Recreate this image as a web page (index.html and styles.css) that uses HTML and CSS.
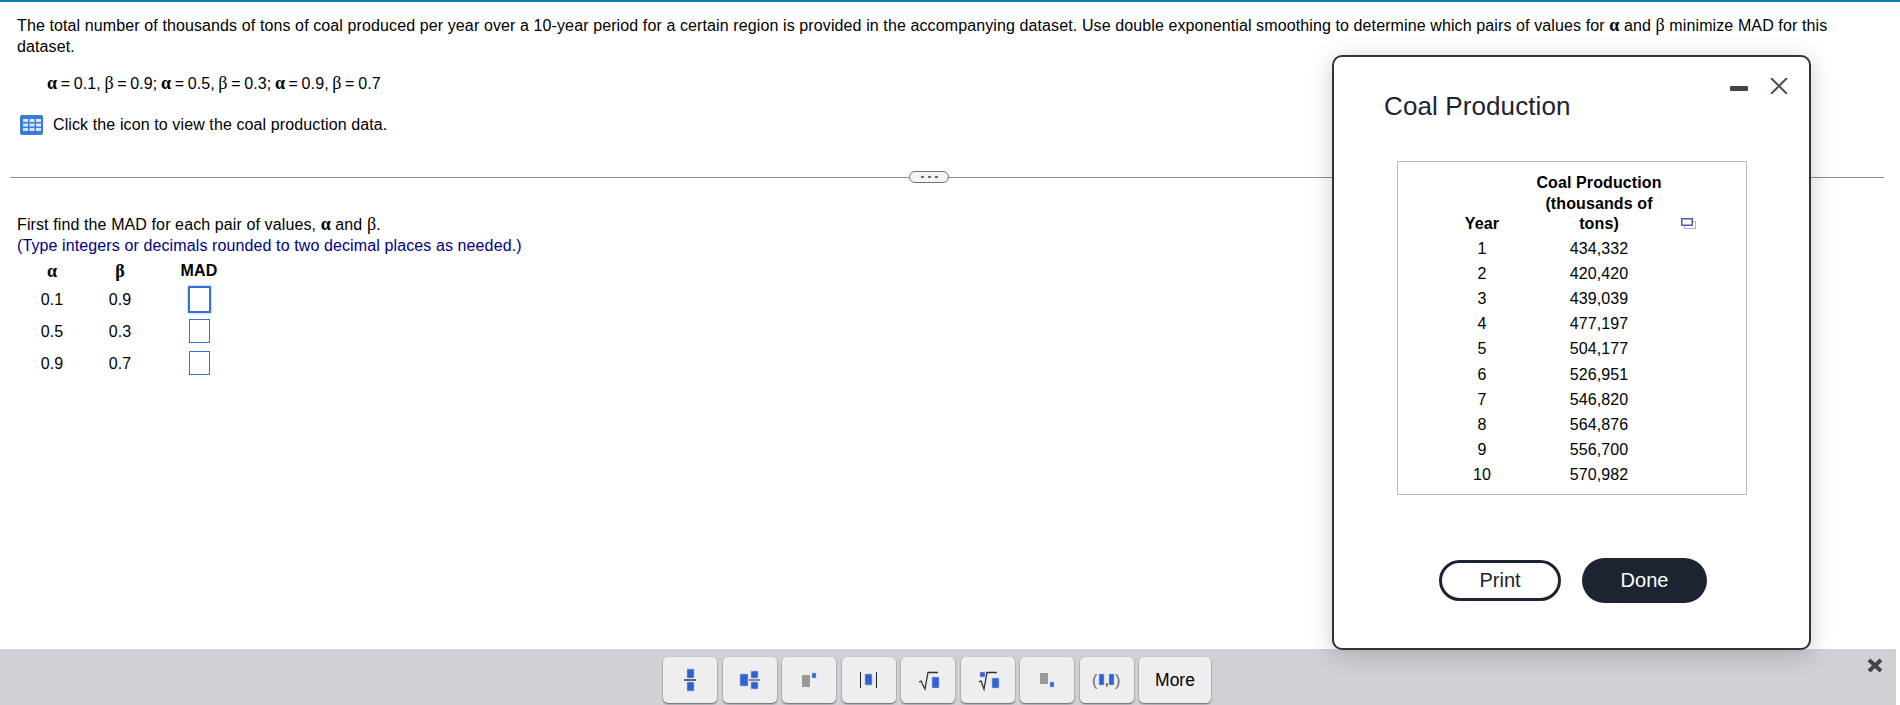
FILE: index.html
```html
<!DOCTYPE html>
<html lang="en">
<head>
  <meta charset="UTF-8">
  <meta name="viewport" content="width=device-width, initial-scale=1.0">
  <title>Coal Production</title>
  <link rel="stylesheet" href="styles.css">
</head>
<body>

  <main class="question">
    <p class="intro">The total number of thousands of tons of coal produced per year over a 10-year period for a certain region is provided in the accompanying dataset. Use double exponential smoothing to determine which pairs of values for <b class="gk">α</b> and <span class="gk">β</span> minimize MAD for this dataset.</p>

    <p class="pairs"><b class="gk">α</b> = 0.1, <span class="gk">β</span> = 0.9; <b class="gk">α</b> = 0.5, <span class="gk">β</span> = 0.3; <b class="gk">α</b> = 0.9, <span class="gk">β</span> = 0.7</p>

    <div class="data-link">
      <svg class="grid-icon" width="23" height="20" viewBox="0 0 23 20">
        <rect width="23" height="20" rx="2" fill="#3b7cdb"/>
        <path d="M3 4h5v3H3zM9.500 4h5v3h-5zM16 4h5v3h-5zM3 8.500h5v3H3zM9.500 8.500h5v3h-5zM16 8.500h5v3h-5zM3 13h5v3H3zM9.500 13h5v3h-5zM16 13h5v3h-5z" fill="#d5e4f8"/>
      </svg>
      <span>Click the icon to view the coal production data.</span>
    </div>

    <div class="divider">
      <span class="line line-left"></span>
      <span class="more-dots">
        <svg width="20" height="4" viewBox="0 0 20 4"><path d="M2 1h3v2H2zM9 1h3v2H9zM16 1h3v2h-3z" fill="#5f6b78"/></svg>
      </span>
      <span class="line"></span>
    </div>

    <p class="prompt">First find the MAD for each pair of values, <b class="gk">α</b> and <span class="gk">β</span>.</p>
    <p class="hint">(Type integers or decimals rounded to two decimal places as needed.)</p>

    <table class="answers">
      <tr>
        <th class="gk">α</th>
        <th class="gk">β</th>
        <th>MAD</th>
      </tr>
      <tr>
        <td>0.1</td>
        <td>0.9</td>
        <td><input type="text" class="answer active"></td>
      </tr>
      <tr>
        <td>0.5</td>
        <td>0.3</td>
        <td><input type="text" class="answer"></td>
      </tr>
      <tr>
        <td>0.9</td>
        <td>0.7</td>
        <td><input type="text" class="answer"></td>
      </tr>
    </table>
  </main>

  <section class="dialog">
    <div class="dialog-head">
      <h2>Coal Production</h2>
      <svg class="dialog-controls" width="58" height="16" viewBox="0 0 58 16">
        <rect x="0" y="8" width="18" height="5" rx="1" fill="#444"/>
        <path d="M41 0l16 16M57 0L41 16" stroke="#47505c" stroke-width="2" fill="none"/>
      </svg>
    </div>

    <div class="data-box">
      <table class="data">
        <tr>
          <th class="col-year">Year</th>
          <th class="col-coal">Coal Production (thousands of tons)</th>
          <th class="col-copy">
            <svg width="15" height="11" viewBox="0 0 15 11">
              <rect x="3.500" y="3.500" width="11" height="7" fill="#fff" stroke="#aab2dc"/>
              <rect x="0.750" y="0.750" width="10.500" height="6.500" fill="#fff" stroke="#4c5ca8" stroke-width="1.500"/>
            </svg>
          </th>
        </tr>
        <tr><td>1</td><td>434,332</td><td></td></tr>
        <tr><td>2</td><td>420,420</td><td></td></tr>
        <tr><td>3</td><td>439,039</td><td></td></tr>
        <tr><td>4</td><td>477,197</td><td></td></tr>
        <tr><td>5</td><td>504,177</td><td></td></tr>
        <tr class="row-shift"><td>6</td><td>526,951</td><td></td></tr>
        <tr><td>7</td><td>546,820</td><td></td></tr>
        <tr><td>8</td><td>564,876</td><td></td></tr>
        <tr><td>9</td><td>556,700</td><td></td></tr>
        <tr><td>10</td><td>570,982</td><td></td></tr>
      </table>
    </div>

    <div class="dialog-buttons">
      <button class="btn-print">Print</button>
      <button class="btn-done">Done</button>
    </div>
  </section>

  <footer class="toolbar">
    <button class="tool">
      <svg width="54" height="46" viewBox="0 0 54 46">
        <path class="bl" d="M24 12h7v9h-7zM24 25h7v9h-7z"/>
        <path d="M21 22h12v2H21z" fill="#666"/>
      </svg>
    </button>
    <button class="tool">
      <svg width="54" height="46" viewBox="0 0 54 46">
        <path class="bl" d="M17 17h8v12h-8zM28 14h7v7h-7zM28 25h7v7h-7z"/>
        <path d="M26 22h11v2H26z" fill="#888"/>
      </svg>
    </button>
    <button class="tool">
      <svg width="54" height="46" viewBox="0 0 54 46">
        <path d="M20 18h8v12h-8z" fill="#999"/>
        <path class="bl" d="M30 16h4v5h-4z"/>
      </svg>
    </button>
    <button class="tool">
      <svg width="54" height="46" viewBox="0 0 54 46">
        <path class="bl" d="M23 17h7v11h-7z"/>
        <path d="M18.500 15v16M34.500 15v16" stroke="#222" fill="none"/>
      </svg>
    </button>
    <button class="tool">
      <svg width="54" height="46" viewBox="0 0 54 46">
        <path d="M18 25l2-1 4 8 3-16.500h10" stroke="#333" stroke-width="1.300" fill="none"/>
        <path class="bl" d="M31 20h7v11h-7z"/>
      </svg>
    </button>
    <button class="tool">
      <svg width="54" height="46" viewBox="0 0 54 46">
        <path d="M18 25l2-1 3 8 3-16.500h10" stroke="#333" stroke-width="1.300" fill="none"/>
        <path class="bl" d="M19 15h5v5h-5zM31 21h7v10h-7z"/>
      </svg>
    </button>
    <button class="tool">
      <svg width="54" height="46" viewBox="0 0 54 46">
        <path d="M20 16h8v11h-8z" fill="#999"/>
        <path class="bl" d="M30 25h4v5h-4z"/>
      </svg>
    </button>
    <button class="tool">
      <svg width="54" height="46" viewBox="0 0 54 46">
        <text class="paren" x="12" y="29">(</text>
        <path class="bl" d="M19 17h5v11h-5zM29 17h5v11h-5z"/>
        <text class="paren comma" x="24.500" y="28">,</text>
        <text class="paren" x="35" y="29">)</text>
      </svg>
    </button>
    <button class="tool tool-more">More</button>
    <svg class="toolbar-close" width="16" height="15" viewBox="0 0 16 15">
      <path d="M2 2l12 11M14 2L2 13" stroke="#444" stroke-width="4" fill="none"/>
    </svg>
  </footer>

</body>
</html>
```

FILE: styles.css
```css
html, body {
  margin: 0;
  height: 705px;
  overflow: hidden;
}
body {
  position: relative;
  display: flex;
  flex-direction: column;
  font-family: 'Liberation Sans', Arial, sans-serif;
  font-size: 16px;
  line-height: 21px;
  letter-spacing: 0.110px;
  color: #000;
  background-color: #fff;
  border-top: 2px solid #0a7fa5;
  box-sizing: border-box;
}
p {
  margin: 0;
}
.gk {
  font-family: 'Liberation Serif', 'DejaVu Serif', serif;
  font-size: 18px;
  line-height: 16px;
}
.question {
  flex: 1;
  padding-top: 13px;
}
.intro {
  padding: 0 50px 0 17px;
}
.pairs {
  margin-top: 16px;
  padding-left: 47px;
  word-spacing: -1px;
}
.data-link {
  display: flex;
  align-items: center;
  gap: 10px;
  margin-top: 20px;
  padding-left: 20px;
}
.divider {
  display: flex;
  align-items: center;
  margin: 36px 16px 0 10px;
}
.line {
  flex: 1;
  height: 1px;
  background-color: #8a9098;
}
.line-left {
  flex: 0 0 899px;
}
.more-dots {
  display: flex;
  align-items: center;
  justify-content: center;
  width: 40px;
  height: 12px;
  box-sizing: border-box;
  border: 1px solid #6b7783;
  border-radius: 6px;
  background-color: #f2f4f6;
}
.prompt {
  margin-top: 31px;
  padding-left: 17px;
}
.hint {
  padding-left: 17px;
  color: #00007f;
}
.answers {
  margin: 4px 0 0 17px;
  border-collapse: collapse;
  table-layout: fixed;
}
.answers th {
  height: 21px;
  padding: 0 0 2px;
  font-weight: bold;
}
.answers th:nth-child(1), .answers td:nth-child(1) {
  width: 70px;
}
.answers th:nth-child(2), .answers td:nth-child(2) {
  width: 66px;
}
.answers th:nth-child(3), .answers td:nth-child(3) {
  width: 92px;
}
.answers td {
  height: 32px;
  padding: 0;
  text-align: center;
}
.answer {
  display: block;
  width: 21px;
  height: 24px;
  margin: 0 auto;
  padding: 0;
  box-sizing: border-box;
  border: 1px solid #3a6fd6;
  background-color: #fff;
}
.answer.active {
  width: 23px;
  height: 27px;
  border: 2px solid #3a6fd6;
  box-shadow: 0 0 2px #7fa3e6;
}

.dialog {
  position: absolute;
  left: 1332px;
  top: 53px;
  z-index: 2;
  width: 479px;
  height: 595px;
  box-sizing: border-box;
  border: 2px solid #333;
  border-radius: 10px;
  background-color: #fff;
  box-shadow: 0 4px 24px rgba(0, 0, 0, 0.2);
}
.dialog-head {
  display: flex;
  justify-content: space-between;
  align-items: flex-start;
  padding: 0 21px 0 50px;
}
.dialog-head h2 {
  margin: 34px 0 0;
  font-size: 26px;
  line-height: 30px;
  font-weight: normal;
  color: #1c2333;
}
.dialog-controls {
  margin-top: 21px;
}
.data-box {
  width: 350px;
  height: 334px;
  box-sizing: border-box;
  margin: 40px 0 0 63px;
  border: 1px solid #bbb;
}
.data {
  margin: 11px 0 0 44px;
  border-collapse: collapse;
  table-layout: fixed;
  text-align: center;
}
.data th {
  padding: 0 0 1px;
  line-height: 20.500px;
  vertical-align: bottom;
}
.data td {
  height: 25px;
  padding: 0;
}
.data .row-shift td {
  padding-top: 1px;
}
.col-year {
  width: 80px;
}
.data .col-coal {
  width: 128px;
  padding: 0 13px 1px;
}
.col-copy {
  width: 24px;
}
.col-copy svg {
  display: block;
  margin: 0 auto 6px;
}
.dialog-buttons {
  display: flex;
  align-items: center;
  gap: 21px;
  margin-top: 63px;
  padding-left: 105px;
}
.dialog-buttons button {
  font-family: inherit;
  font-size: 20px;
  cursor: pointer;
  color: #1c2331;
}
.btn-print {
  width: 122px;
  height: 41px;
  box-sizing: border-box;
  border: 3px solid #1c2331;
  border-radius: 21px;
  background-color: #fff;
}
.dialog-buttons .btn-done {
  width: 125px;
  height: 45px;
  border: none;
  border-radius: 23px;
  background-color: #1c2331;
  color: #fff;
}

.toolbar {
  display: flex;
  align-items: flex-start;
  gap: 5.500px;
  height: 56px;
  box-sizing: border-box;
  margin-right: 4px;
  padding: 8px 13px 0 663px;
  background-color: #d0d1d6;
}
.tool {
  width: 54px;
  height: 46px;
  padding: 0;
  border: none;
  border-radius: 5px;
  background-color: #eee;
  box-shadow: 0 1px 2px rgba(0, 0, 0, 0.55);
  font-family: inherit;
  font-size: 16px;
  cursor: pointer;
}
.tool svg {
  display: block;
}
.tool-more {
  width: 72px;
  font-size: 17.500px;
}
.bl {
  fill: #2f62cf;
  stroke: #a9c0ec;
  stroke-width: 0.600;
}
.paren {
  font-family: 'Liberation Sans', Arial, sans-serif;
  font-size: 16px;
  fill: #667;
}
.comma {
  fill: #333;
}
.toolbar-close {
  margin: 1px 0 0 auto;
}
```
